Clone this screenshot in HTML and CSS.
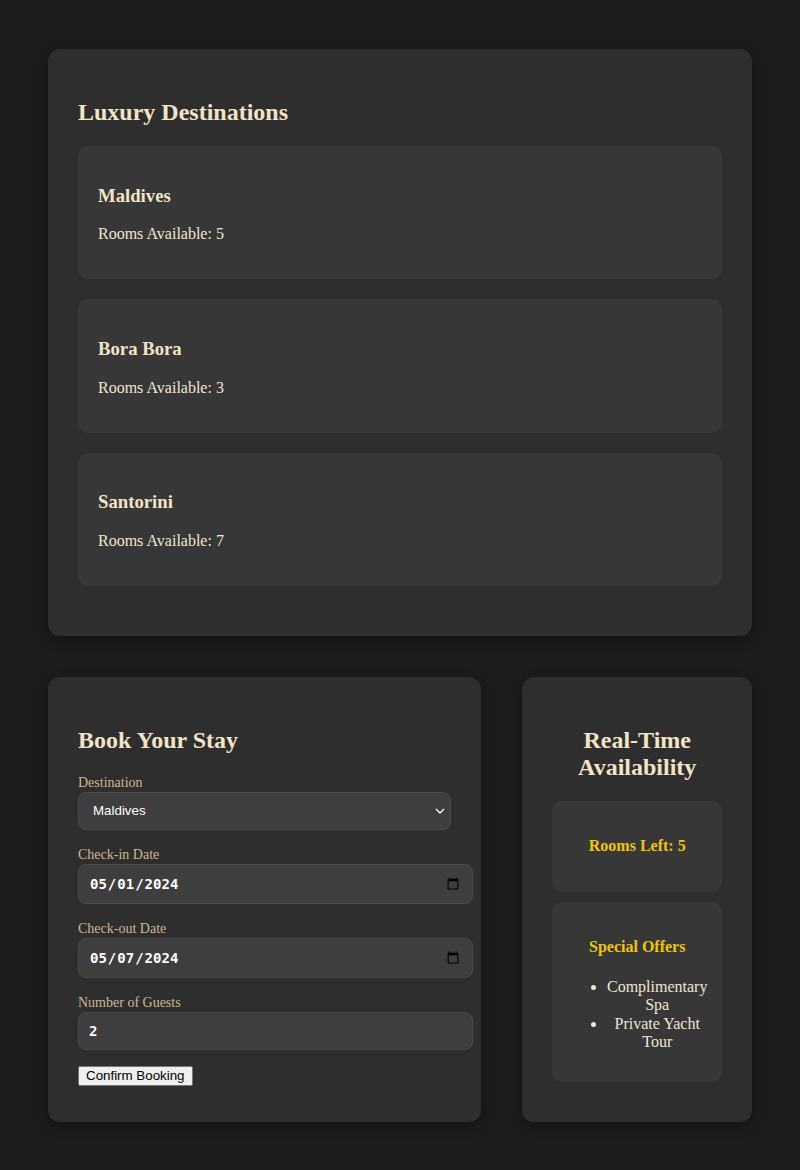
FILE: index.html
```html
<!DOCTYPE html>
<html lang="en">
<head>
<meta charset="utf-8">
<title>Luxury Booking</title>
<link rel="stylesheet" href="styles.css">
</head>
<body>
<div class="page">
  <section class="card destinations">
    <h2>Luxury Destinations</h2>
    <div class="dest">
      <h3>Maldives</h3>
      <p>Rooms Available: 5</p>
    </div>
    <div class="dest">
      <h3>Bora Bora</h3>
      <p>Rooms Available: 3</p>
    </div>
    <div class="dest">
      <h3>Santorini</h3>
      <p>Rooms Available: 7</p>
    </div>
  </section>

  <div class="bottom-row">
    <section class="card booking">
      <h2>Book Your Stay</h2>
      <form class="form">
        <label for="dest">Destination</label>
        <select id="dest" class="field select">
          <option>Maldives</option>
          <option>Bora Bora</option>
          <option>Santorini</option>
        </select>
        <label for="checkin">Check-in Date</label>
        <input id="checkin" class="field input" type="date" value="2024-05-01">
        <label for="checkout">Check-out Date</label>
        <input id="checkout" class="field input" type="date" value="2024-05-07">
        <label for="guests">Number of Guests</label>
        <input id="guests" class="field input" type="number" value="2">
        <button type="button" class="btn">Confirm Booking</button>
      </form>
    </section>

    <section class="card availability">
      <h2>Real-Time Availability</h2>
      <div class="box">
        <h4>Rooms Left: 5</h4>
      </div>
      <div class="box">
        <h4>Special Offers</h4>
        <ul>
          <li>Complimentary Spa</li>
          <li>Private Yacht Tour</li>
        </ul>
      </div>
    </section>
  </div>
</div>
</body>
</html>
```

FILE: styles.css
```css
html, body {
  background: #1c1c1c;
}
body {
  margin: 8px;
  font-family: "Liberation Serif", "Times New Roman", serif;
  color: #f0e6d2;
}
.page {
  padding: 41px 40px 40px;
  display: flex;
  flex-direction: column;
  gap: 41px;
}
.card {
  background: #2e2e2e;
  border-radius: 12px;
  padding: 30px;
  box-shadow: 0 4px 12px rgba(0, 0, 0, 0.35);
}
.card h2 {
  font-size: 24px;
  margin: 19.92px 0;
  color: #f2e4c6;
}
.dest {
  background: #373737;
  border-radius: 10px;
  padding: 20px;
  margin-bottom: 20px;
}
.dest h3 {
  font-size: 18.72px;
  margin: 18.72px 0;
  color: #f2e4c6;
}
.dest p {
  font-size: 16px;
  margin: 16px 0;
}
.bottom-row {
  display: grid;
  grid-template-columns: 433px 1fr;
  gap: 41px;
}
.form {
  display: block;
}
.form label {
  display: block;
  font-size: 14px;
  line-height: 18px;
  color: #cdb88f;
  margin: 0;
}
.field {
  background: #3e3e3e;
  border: 1px solid #4a4a4a;
  border-radius: 8px;
  color: #ffffff;
  margin: 0 0 16px;
}
.select {
  display: block;
  width: 100%;
  height: 38px;
  box-sizing: border-box;
  padding: 10px 10px 10px 14px;
  font-family: "Liberation Sans", Arial, sans-serif;
  font-size: 13.33px;
  line-height: 16px;
  appearance: none;
  -webkit-appearance: none;
  background-image: url("data:image/svg+xml;utf8,<svg xmlns='http://www.w3.org/2000/svg' width='10' height='6' viewBox='0 0 10 6'><path d='M1 1 L5 5 L9 1' fill='none' stroke='white' stroke-width='1.3'/></svg>");
  background-repeat: no-repeat;
  background-position: right 5px center;
}
.input {
  display: block;
  width: 100%;
  box-sizing: content-box;
  padding: 10px;
  font-family: "DejaVu Sans Mono", "Liberation Mono", monospace;
  font-weight: bold;
  font-size: 14px;
  color-scheme: light;
}
.input[type="number"] {
  height: 16px;
}
.btn {
  display: inline-block;
  font-family: "Liberation Sans", Arial, sans-serif;
  font-size: 13.33px;
  color: #000;
  background: #efefef;
  border: 1px solid #767676;
  border-radius: 2px;
  padding: 1px 7px;
  line-height: 16px;
  margin: 0;
}
.availability {
  text-align: center;
}
.box {
  background: #373737;
  border-radius: 10px;
  padding: 15px;
  margin-bottom: 10px;
}
.box h4 {
  font-size: 16px;
  line-height: 18.5px;
  margin: 21.28px 0;
  color: #f1c40f;
}
.box ul {
  margin: 16px 0;
  padding-left: 40px;
  font-size: 16px;
}
.box li {
  line-height: 18.3px;
}
```
